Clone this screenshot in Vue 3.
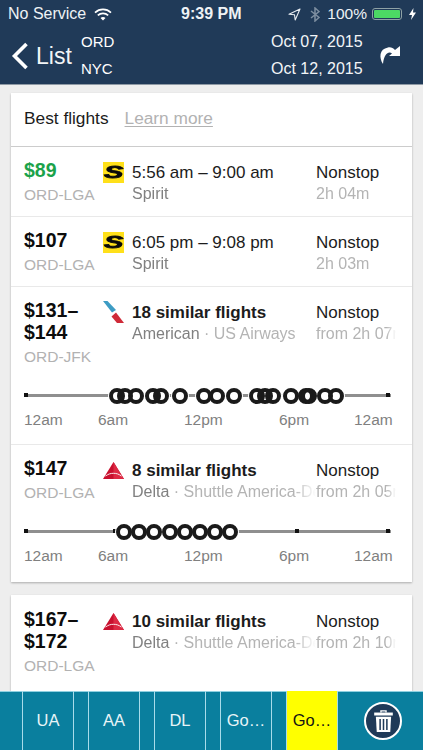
<script setup>
const lab = ['12am', '6am', '12pm', '6pm', '12am']
const rows = [
  { price: ['$89'], green: true, route: 'ORD-LGA', logo: 'spirit', title: '5:56 am – 9:00 am', a: 'Spirit', b: '', time: '2h 04m' },
  { price: ['$107'], route: 'ORD-LGA', logo: 'spirit', title: '6:05 pm – 9:08 pm', a: 'Spirit', b: '', time: '2h 03m' },
  { price: ['$131–', '$144'], route: 'ORD-JFK', logo: 'aa', title: '18 similar flights', bold: true, a: 'American', b: ' · US Airways', time: 'from 2h 07m',
    dots: [117, 125, 136, 153, 161, 180, 204, 217, 234, 257, 265, 273, 291, 306, 309, 325, 336], ticks: [] },
  { price: ['$147'], route: 'ORD-LGA', logo: 'delta', title: '8 similar flights', bold: true, a: 'Delta', b: ' · Shuttle America-Delta', time: 'from 2h 05m',
    dots: [124, 139, 154, 170, 185, 200, 215, 230], ticks: [115, 297] }
]
const last = { price: ['$167–', '$172'], route: 'ORD-LGA', title: '10 similar flights', a: 'Delta', b: ' · Shuttle America-Delta', time: 'from 2h 10m' }
const chips = ['UA', 'AA', 'DL', 'Go…', 'Go…']
</script>

<template>
  <div class="app">
    <header class="head">
      <div class="status">
        <div class="st-left">
          <span>No Service</span>
          <svg class="wifi" viewBox="0 0 18 13" width="18" height="13"><path d="M1 4.600C5.600.4 12.400.4 17 4.600" fill="none" stroke="#fff" stroke-width="1.700"/><path d="M3.800 7.400c3-2.700 7.400-2.700 10.400 0" fill="none" stroke="#fff" stroke-width="1.700"/><path d="M6.500 10c1.500-1.300 3.500-1.300 5 0L9 12.600z" fill="#fff"/></svg>
        </div>
        <b class="clock">9:39 PM</b>
        <div class="st-right">
          <svg viewBox="0 0 13 13" width="13" height="13"><path d="M12 1 1 6.300l5.500.4.700 5.300z" fill="none" stroke="#e8edf2" stroke-width="1.100" stroke-linejoin="round"/></svg>
          <svg class="bt" viewBox="0 0 10 15" width="10" height="15"><path d="M1 4l8 6.500L5 14V1l4 3.500L1 11" fill="none" stroke="#7d8ea0" stroke-width="1.500"/></svg>
          <span class="pct">100%</span>
          <div class="batt"><i></i></div>
          <svg viewBox="0 0 7 12" width="7" height="12"><path d="M4.500 0 0 7h3l-1 5 5-7.500H4z" fill="#fff"/></svg>
        </div>
      </div>
      <div class="nav">
        <svg class="chev" viewBox="0 0 18 28" width="18" height="28"><path d="M15.500 2 3.500 14l12 12" fill="none" stroke="#fff" stroke-width="3.600"/></svg>
        <span class="list">List</span>
        <div class="stack codes"><span>ORD</span><span>NYC</span></div>
        <div class="stack dates"><span>Oct 07, 2015</span><span>Oct 12, 2015</span></div>
        <svg class="redo" viewBox="0 0 22 20" width="22" height="20"><path d="M4 19C0 13 0 4 9 2.500c3-.5 5 .5 7 2.500l5-4v10H10l3-2.500C10 6 5 8 4 19z" fill="#fff"/></svg>
      </div>
    </header>

    <main class="main">
      <section class="card">
        <div class="card-head"><span>Best flights</span><a>Learn more</a></div>
        <article v-for="(f, i) in rows" :key="i" class="row">
          <div class="top">
            <div class="price-col">
              <div v-for="p in f.price" :key="p" class="price" :class="{ green: f.green }">{{ p }}</div>
              <div class="route">{{ f.route }}</div>
            </div>
            <div class="logo-col">
              <div v-if="f.logo === 'spirit'" class="spirit"><span>S</span></div>
              <svg v-else-if="f.logo === 'aa'" class="aa" viewBox="0 0 21 22" width="21" height="22"><path d="M0 0h4.500L13 9l-4 2.500z" fill="#3d9cc4"/><path d="M8.500 15.500 13 11.500 21 22h-7z" fill="#cf2a38"/></svg>
              <svg v-else class="delta" viewBox="0 0 21 17" width="21" height="17"><path d="M10.500 0 21 17H0z" fill="#c8102e"/><path d="M10.500 0 21 17H10.500z" fill="#dd2a44"/><path d="M2.500 14c3-2 5-2.700 8-2.700s5 .7 8 2.700" fill="none" stroke="#fff" stroke-width=".9"/></svg>
            </div>
            <div class="info">
              <div class="title" :class="{ strong: f.bold }">{{ f.title }}</div>
              <div class="sub"><span class="carrier">{{ f.a }}</span>{{ f.b }}</div>
            </div>
            <div class="stops">
              <div class="title">Nonstop</div>
              <div class="sub">{{ f.time }}</div>
            </div>
          </div>
          <div v-if="f.dots" class="chart">
            <div class="track">
              <i class="tick" style="left: 0"></i>
              <i class="tick" style="left: 362px"></i>
              <i v-for="t in f.ticks" :key="t" class="tick" :style="{ left: (t - 26) + 'px' }"></i>
              <i v-for="(d, j) in f.dots" :key="'d' + j" class="disc" :style="{ left: (d - 32) + 'px' }"></i>
              <i v-for="(d, j) in f.dots" :key="'r' + j" class="ring" :style="{ left: (d - 32) + 'px' }"></i>
            </div>
            <div class="hours"><span v-for="(l, j) in lab" :key="j">{{ l }}</span></div>
          </div>
        </article>
      </section>

      <section class="card">
        <article class="row open">
          <div class="top">
            <div class="price-col">
              <div v-for="p in last.price" :key="p" class="price">{{ p }}</div>
              <div class="route">{{ last.route }}</div>
            </div>
            <div class="logo-col">
              <svg class="delta" viewBox="0 0 21 17" width="21" height="17"><path d="M10.500 0 21 17H0z" fill="#c8102e"/><path d="M10.500 0 21 17H10.500z" fill="#dd2a44"/><path d="M2.500 14c3-2 5-2.700 8-2.700s5 .7 8 2.700" fill="none" stroke="#fff" stroke-width=".9"/></svg>
            </div>
            <div class="info">
              <div class="title strong">{{ last.title }}</div>
              <div class="sub"><span class="carrier">{{ last.a }}</span>{{ last.b }}</div>
            </div>
            <div class="stops">
              <div class="title">Nonstop</div>
              <div class="sub">{{ last.time }}</div>
            </div>
          </div>
        </article>
      </section>
    </main>

    <footer class="bar">
      <div v-for="(c, i) in chips" :key="i" class="chip" :class="{ on: i === 4 }">{{ c }}</div>
      <div class="trash-wrap">
        <div class="trash">
          <svg viewBox="0 0 22 26" width="21" height="24"><path d="M8 3V1h6v2" fill="none" stroke="#fff" stroke-width="1.600"/><rect x="0" y="3" width="22" height="3.500" fill="#fff"/><path d="M2 8h18l-1 18H3z" fill="#fff"/><path d="M7 10.500v13M11 10.500v13M15 10.500v13" stroke="#1f3a58" stroke-width="1.800"/></svg>
        </div>
      </div>
    </footer>
  </div>
</template>

<style>
html, body { margin: 0; padding: 0; }
</style>

<style scoped>
.app {
  width: 423px;
  height: 750px;
  display: flex;
  flex-direction: column;
  overflow: hidden;
  background: #eeeeee;
  font-family: "Liberation Sans", Arial, sans-serif;
}
.head { background: #203a58; color: #fff; height: 84px; flex: none; border-bottom: 1px solid #8f9aa5; }
.status {
  height: 28px;
  display: grid;
  grid-template-columns: 173px auto 1fr;
  align-items: center;
  padding: 0 7px 0 8px;
  font-size: 16px;
  color: #eef2f5;
}
.st-left { display: flex; align-items: center; gap: 8px; }
.clock { font-size: 16px; }
.st-right { display: flex; align-items: center; justify-content: flex-end; gap: 4px; }
.pct { font-size: 15.500px; }
.bt { margin: 0 3px 0 5px; }
.batt { width: 30px; height: 12px; border: 1px solid #8fa2a5; border-radius: 3px; padding: 1px; box-sizing: border-box; margin-left: 1px; margin-right: 3px; }
.batt i { display: block; height: 100%; background: #4cd964; border-radius: 1px; }
.nav { height: 56px; display: flex; align-items: center; padding-left: 11px; }
.chev { flex: none; margin-top: -1px; }
.list { font-size: 23px; margin-left: 7px; width: 45px; color: #f2f5f7; }
.stack { display: flex; flex-direction: column; gap: 6px; line-height: 21px; margin-top: -3px; }
.codes { font-size: 15px; width: 190px; }
.dates { font-size: 16px; width: 108px; color: #f2f5f7; }
.redo { flex: none; margin-top: -3px; }

.main { flex: 1; min-height: 0; overflow: hidden; padding: 8px 11px 0; display: flex; flex-direction: column; gap: 13px; }
.card { background: #fff; flex: none; box-shadow: 0 1px 2px rgba(0, 0, 0, .28); }
.card-head {
  height: 54px;
  box-sizing: border-box;
  border-bottom: 1px solid #cccccc;
  display: flex;
  align-items: center;
  padding: 0 13px 2px;
  gap: 16px;
  font-size: 17.300px;
  color: #1b1b1b;
}
.card-head a { color: #b2b2b2; text-decoration: underline; text-underline-offset: 2px; text-decoration-thickness: 1px; }
.row { padding: 12px 0 9px 13px; border-bottom: 1px solid #e9e9e9; }
.row:last-child { border-bottom: 0; padding-bottom: 11px; }
.row.open { padding-top: 13px; padding-bottom: 40px; }
.top { display: flex; }
.price-col { width: 79px; flex: none; }
.price { font-size: 19.500px; line-height: 22px; font-weight: 700; color: #0c0c0c; }
.price.green { color: #1ba24a; }
.route { font-size: 15.500px; line-height: 24px; margin-top: 2px; color: #b2b2b2; }
.logo-col { width: 29px; flex: none; padding-top: 3px; }
.spirit { width: 21px; height: 21px; background: #ffe01a; display: flex; align-items: center; justify-content: center; overflow: hidden; }
.spirit span { font-size: 20px; font-weight: 900; font-style: italic; color: #0a0a0a; transform: scale(1.450, .800); -webkit-text-stroke: 1px #0a0a0a; line-height: 21px; }
.aa { display: block; margin-top: -1px; }
.delta { display: block; margin-top: 2px; }
.info { width: 184px; flex: none; padding-top: 3px; }
.stops { width: 80px; flex: none; padding-top: 3px; }
.title { font-size: 17px; line-height: 21px; color: #1c1c1c; white-space: nowrap; }
.title.strong { font-weight: 700; }
.sub {
  font-size: 16px;
  line-height: 21px;
  color: #b4b4b4;
  white-space: nowrap;
  overflow: hidden;
  -webkit-mask-image: linear-gradient(to right, #000 88%, transparent 100%);
  mask-image: linear-gradient(to right, #000 88%, transparent 100%);
}
.carrier { color: #808080; }
.chart { padding: 18px 0 5px; }
.track { position: relative; height: 18px; width: 367px; }
.track::before { content: ""; position: absolute; left: 0; right: 0; top: 7px; height: 3px; background: #8f8f8f; }
.tick { position: absolute; top: 6px; width: 4px; height: 4px; background: #111; }
.disc, .ring { position: absolute; top: .5px; width: 16px; height: 16px; box-sizing: border-box; border-radius: 50%; }
.disc { background: #fff; box-shadow: 0 0 0 1px #fff; }
.ring { border: 4.500px solid #1a1a1a; }
.hours { display: grid; grid-template-columns: 74px 86px 95px 75px auto; margin-top: 5px; font-size: 15.500px; line-height: 20px; color: #808080; }

.bar {
  height: 59px;
  flex: none;
  background: #0a7f9e;
  border-top: 1px solid #8fd0e0;
  box-sizing: border-box;
  display: flex;
  padding-left: 22px;
  gap: 14px;
}
.chip {
  width: 52px;
  flex: none;
  box-sizing: border-box;
  border-left: 1px solid #a9dcea;
  border-right: 1px solid #a9dcea;
  display: flex;
  align-items: center;
  justify-content: center;
  color: #e8f4f7;
  font-size: 16.500px;
  margin-top: -1px;
}
.chip.on { background: #ffff00; color: #141414; }
.trash-wrap { flex: 1; display: flex; align-items: center; padding-left: 12px; }
.trash { width: 38px; height: 38px; box-sizing: border-box; border-radius: 50%; background: #1f3a58; border: 2px solid #fff; display: flex; align-items: center; justify-content: center; }
.trash svg { width: 19px; height: 22px; }
</style>
